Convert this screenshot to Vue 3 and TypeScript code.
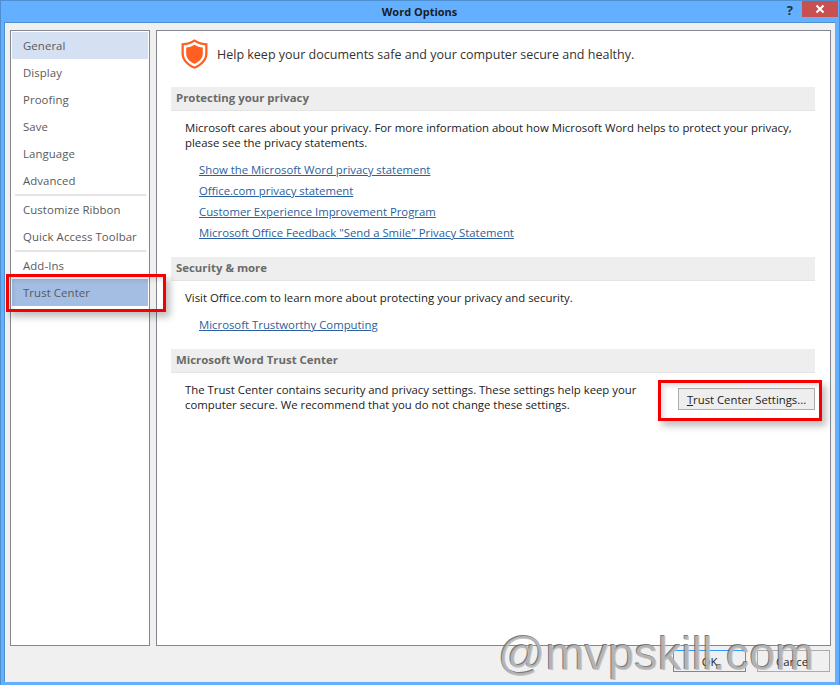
<script setup lang="ts">
const groups: string[][] = [
  ['General', 'Display', 'Proofing', 'Save', 'Language', 'Advanced'],
  ['Customize Ribbon', 'Quick Access Toolbar'],
  ['Add-Ins', 'Trust Center'],
]
const privacyLinks: string[] = [
  'Show the Microsoft Word privacy statement',
  'Office.com privacy statement',
  'Customer Experience Improvement Program',
  'Microsoft Office Feedback "Send a Smile" Privacy Statement',
]
</script>

<template>
  <div class="window">
    <div class="titlebar">
      <span class="title">Word Options</span>
      <span class="help">?</span>
      <span class="close">
        <svg width="10" height="10" viewBox="0 0 10 10"><path d="M1.5 1.5 8.5 8.5M8.5 1.5 1.5 8.5" stroke="#fff" stroke-width="2" fill="none" /></svg>
      </span>
    </div>
    <div class="client">
      <div class="panels">
        <nav class="sidebar">
          <div v-for="(group, g) in groups" :key="g" class="group">
            <div
              v-for="item in group"
              :key="item"
              class="nav-item"
              :class="{ first: item === 'General', active: item === 'Trust Center' }"
            >{{ item }}</div>
          </div>
        </nav>
        <main class="content">
          <div class="intro">
            <svg class="shield" width="27" height="30" viewBox="1 1 26 29.2" preserveAspectRatio="none">
              <path d="M14 1.2C10.5 4 6 5 1.5 5.2V15C1.5 22 7 27 14 30 21 27 26.5 22 26.5 15V5.2C22 5 17.500 4 14 1.2Z" fill="#ff5f21" />
              <path d="M14 3.700C11 5.800 7.300 6.900 3.700 7.200V15C3.700 20.800 8.200 25 14 27.700 19.800 25 24.300 20.800 24.300 15V7.200C20.700 6.900 17 5.800 14 3.700Z" fill="#fff" />
              <path d="M14 6.500C11.700 8 8.800 9 6 9.300V15C6 19.800 9.500 23 14 25.200 18.500 23 22 19.800 22 15V9.300C19.200 9 16.300 8 14 6.500Z" fill="#ff5f21" />
            </svg>
            <span class="intro-text">Help keep your documents safe and your computer secure and healthy.</span>
          </div>

          <h2 class="section-head">Protecting your privacy</h2>
          <p class="para first-para">Microsoft cares about your privacy. For more information about how Microsoft Word helps to protect your privacy,<br />please see the privacy statements.</p>
          <ul class="links">
            <li v-for="link in privacyLinks" :key="link"><a>{{ link }}</a></li>
          </ul>

          <h2 class="section-head second">Security &amp; more</h2>
          <p class="para">Visit Office.com to learn more about protecting your privacy and security.</p>
          <ul class="links single">
            <li><a>Microsoft Trustworthy Computing</a></li>
          </ul>

          <h2 class="section-head third">Microsoft Word Trust Center</h2>
          <div class="trust-row">
            <p class="para trust-para">The Trust Center contains security and privacy settings. These settings help keep your<br />computer secure. We recommend that you do not change these settings.</p>
            <button class="btn settings"><u>T</u>rust Center Settings...</button>
          </div>
        </main>
      </div>
      <div class="footer">
        <button class="btn ok">OK</button>
        <button class="btn cancel">Cancel</button>
      </div>
    </div>

    <div class="callout callout-nav"></div>
    <div class="callout callout-btn"></div>
    <div class="watermark">@mvpskill.com</div>
  </div>
</template>

<style>
html, body { margin: 0; padding: 0; background: #fff; }
</style>

<style scoped>
.window {
  position: relative;
  width: 840px;
  height: 685px;
  box-sizing: border-box;
  background: #62b0ff;
  border-top: 1px solid #4f8fd0;
  border-left: 1px solid #4f8fd0;
  border-right: 1px solid #4f8fd0;
  display: flex;
  flex-direction: column;
  padding: 0 4px 3px 3px;
  font-family: "Open Sans", "Noto Sans", sans-serif;
  font-size: 11.5px;
  color: #222;
  overflow: hidden;
}
.titlebar {
  height: 21px;
  flex: none;
  position: relative;
  display: flex;
  justify-content: center;
  align-items: center;
}
.title { font-weight: 700; font-size: 11px; color: #1c1c1c; }
.help {
  position: absolute;
  right: 42px;
  top: 0;
  font-weight: 700;
  font-size: 13px;
  color: #22303c;
}
.close {
  position: absolute;
  right: -3px;
  top: 0;
  width: 36px;
  height: 16px;
  background: #c75050;
  display: flex;
  align-items: center;
  justify-content: center;
}
.client {
  flex: 1;
  min-height: 0;
  background: #f0f0f0;
  border: 1px solid #4f8fd0;
  border-bottom: none;
  border-right: none;
  display: flex;
  flex-direction: column;
  padding: 7px 4px 0 5px;
}
.panels {
  display: flex;
  gap: 6px;
  height: 616px;
  flex: none;
}
.sidebar {
  width: 140px;
  box-sizing: border-box;
  background: #fff;
  border: 1px solid #82878f;
  padding: 1px 0 0 1px;
}
.group + .group::before {
  content: "";
  display: block;
  height: 2px;
  margin: 0 3px;
  background: #e4e4e4;
}
.nav-item {
  height: 27px;
  line-height: 27px;
  padding-left: 11px;
  margin-right: 1px;
  color: #5a5a5a;
  font-size: 11.4px;
  letter-spacing: 0.08px;
  white-space: nowrap;
}
.nav-item.first { background: #d5e1f2; }
.nav-item.active { background: #a3bde3; }
.content {
  flex: 1;
  background: #fff;
  border: 1px solid #82878f;
  padding: 7px 15px 0 14px;
}
.intro {
  display: flex;
  align-items: center;
  height: 31px;
  padding-left: 10px;
  gap: 9px;
  font-size: 12.5px;
  color: #333;
}
.intro-text { padding-top: 2px; }
.shield { flex: none; }
.section-head {
  margin: 18px 0 0;
  height: 24px;
  box-sizing: border-box;
  line-height: 22px;
  background: #eeeeee;
  border-bottom: 1px solid #e4e4e4;
  padding-left: 5px;
  font-size: 11.4px;
  font-weight: 700;
  color: #6a6a6a;
}
.section-head.second { margin-top: 14px; }
.section-head.third { margin-top: 14px; }
.para {
  margin: 0;
  padding-left: 14px;
  line-height: 15px;
  color: #1a1a1a;
  font-size: 11.4px;
  padding-top: 9px;
  white-space: nowrap;
}
.trust-para { font-size: 11.35px; }
.links {
  list-style: none;
  margin: 0;
  padding: 9px 0 0 28px;
}
.links.single { padding-top: 9px; }
.links li {
  height: 21px;
  line-height: 21px;
}
.links a {
  color: #2b5f9e;
  text-decoration: underline;
  font-size: 11.35px;
}
.trust-row {
  display: flex;
  justify-content: space-between;
  align-items: flex-start;
}
.btn {
  font-family: inherit;
  font-size: 11.3px;
  color: #222;
  box-sizing: border-box;
  height: 22px;
  padding: 0;
  background: #f0f0f0;
  border: 1px solid #acacac;
}
.settings {
  width: 137px;
  margin-top: 15px;
  background: #eeeeee;
}
.footer {
  display: flex;
  justify-content: flex-end;
  gap: 11px;
  padding: 4px 1px 0 0;
}
.ok, .cancel { width: 73px; }
.ok { border-color: #3399ff; }
.callout {
  position: absolute;
  box-sizing: border-box;
  border: 3px solid #f40000;
  box-shadow: 4px 5px 7px rgba(0, 0, 0, 0.25), inset 3px 3px 5px rgba(0, 0, 0, 0.12);
}
.callout-nav { left: 5px; top: 273px; width: 160px; height: 38px; }
.callout-btn { left: 657px; top: 379px; width: 164px; height: 41px; }
.watermark {
  position: absolute;
  left: 497px;
  top: 627px;
  font-family: "Liberation Sans", sans-serif;
  font-size: 47px;
  line-height: 52px;
  color: rgba(190, 190, 190, 0.85);
  text-shadow: -1px -1px 0 rgba(90, 90, 90, 0.8);
  white-space: nowrap;
}
</style>
